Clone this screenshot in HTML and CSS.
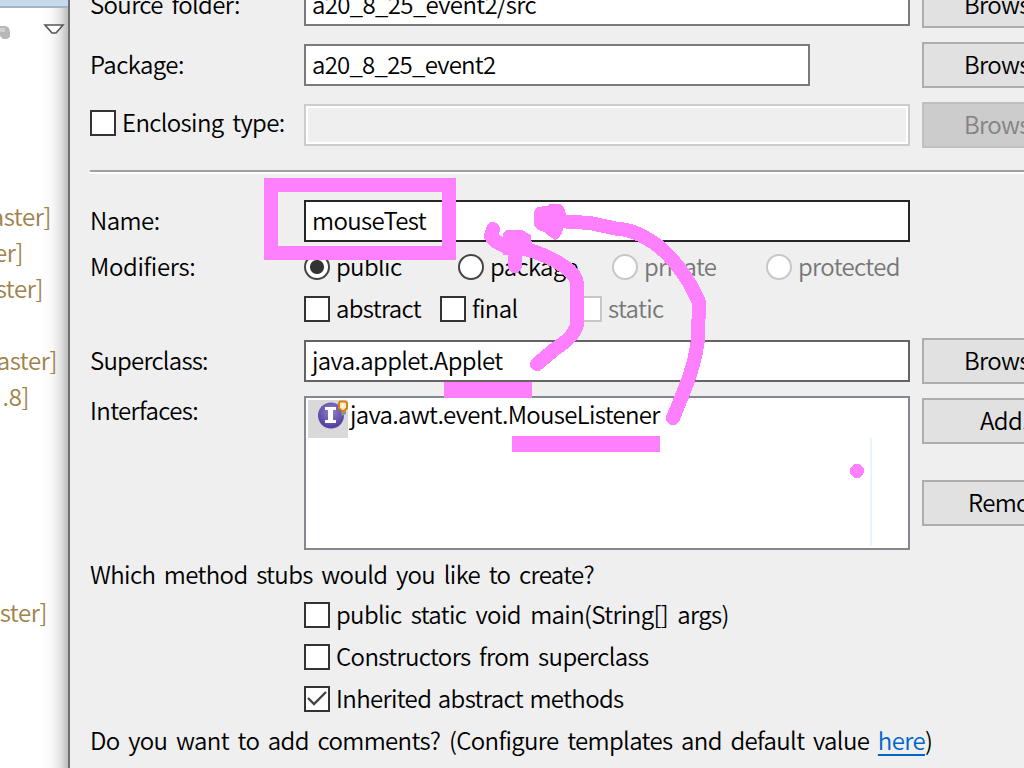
FILE: index.html
```
<!DOCTYPE html>
<html lang="en">
<head>
<meta charset="utf-8">
<title>New Java Class</title>
<link rel="stylesheet" href="styles.css">
</head>
<body>
<div class="screen">
  <aside class="explorer">
    <div class="tabbar"></div>
    <div class="toolbar">
      <svg class="tools" width="68" height="40" viewBox="0 0 68 40">
        <path d="M0 18H6L9 20L10 24V29L7 31H3L0 28Z" fill="#b8b8b8"/>
        <path d="M0 20H5V24H0Z" fill="#d0d0d0"/>
        <path d="M45 17H63L56 25H52Z" fill="#fff" stroke="#555" stroke-width="1.6"/>
      </svg>
    </div>
    <div class="tree">
      <div class="node w51"><span>aster]</span></div>
      <div class="node w22"><span>er]</span></div>
      <div class="node w42"><span>ster]</span></div>
      <div class="node"></div>
      <div class="node w57"><span>aster]</span></div>
      <div class="node w28"><span>.8]</span></div>
      <div class="node"></div><div class="node"></div><div class="node"></div><div class="node"></div><div class="node"></div>
      <div class="node w46"><span>ster]</span></div>
    </div>
  </aside>
  <main class="dialog">
    <div class="row">
      <label class="label"><span>Source folder:</span></label>
      <div class="field"><span>a20_8_25_event2/src</span></div>
      <div class="button"><span>Browse...</span></div>
    </div>
    <div class="row">
      <label class="label"><span class="t-package">Package:</span></label>
      <div class="field short"><span class="t-pkg">a20_8_25_event2</span></div>
      <div class="button"><span>Browse...</span></div>
    </div>
    <div class="row">
      <label class="label enclosing"><i class="box"></i><span>Enclosing type:</span></label>
      <div class="field off"></div>
      <div class="button off"><span>Browse...</span></div>
    </div>
    <div class="separator"></div>
    <div class="row name">
      <label class="label"><span class="t-name">Name:</span></label>
      <div class="field focus"><span>mouseTest</span></div>
    </div>
    <div class="row options">
      <label class="label"><span class="t-modifiers">Modifiers:</span></label>
      <div class="radios">
        <div class="option"><i class="radio on"></i><span>public</span></div>
        <div class="option"><i class="radio"></i><span>package</span></div>
        <div class="option off"><i class="radio"></i><span>private</span></div>
        <div class="option off"><i class="radio"></i><span>protected</span></div>
      </div>
    </div>
    <div class="row checks">
      <div class="option c1"><i class="box"></i><span>abstract</span></div>
      <div class="option c2"><i class="box"></i><span>final</span></div>
      <div class="option off"><i class="box"></i><span>static</span></div>
    </div>
    <div class="row super">
      <label class="label"><span class="t-super">Superclass:</span></label>
      <div class="field dark"><span>java.applet.Applet</span></div>
      <div class="button"><span>Browse...</span></div>
    </div>
    <div class="row interfaces">
      <label class="label"><span>Interfaces:</span></label>
      <div class="list">
        <div class="item">
          <div class="iconcell">
            <svg width="40" height="38" viewBox="0 0 40 38">
              <defs><radialGradient id="ball" cx=".5" cy=".35" r=".65"><stop offset="0" stop-color="#9181cc"/><stop offset="1" stop-color="#513b9c"/></radialGradient></defs>
              <circle cx="23" cy="15.500" r="13" fill="url(#ball)"/>
              <path d="M17 7H28V10H25V20H28V23H17V20H20V10H17Z" fill="#fff"/>
              <path d="M33 12L38 11V14L34 16Z" fill="#849a91"/>
              <path d="M32 1.500H37L39 3V8L36 11H34L31 8V3Z" fill="#fff0cc" stroke="#df7c13" stroke-width="2"/>
            </svg>
          </div>
          <span class="t-listener">java.awt.event.MouseListener</span>
        </div>
        <div class="listline"></div>
      </div>
      <div class="stack">
        <div class="button"><span class="t-add">Add...</span></div>
        <div class="button"><span class="t-remove">Remove</span></div>
      </div>
    </div>
    <div class="question"><span>Which method stubs would you like to create?</span></div>
    <div class="stubs">
      <div class="option"><i class="box"></i><span class="t-main">public static void main(String[] args)</span></div>
      <div class="option"><i class="box"></i><span>Constructors from superclass</span></div>
      <div class="option"><i class="box"><svg width="22" height="22" viewBox="0 0 22 22"><path d="M2 10L8 16L20 4" fill="none" stroke="#444" stroke-width="2.400"/></svg></i><span class="t-inherit">Inherited abstract methods</span></div>
    </div>
    <div class="comments"><span>Do you want to add comments? (Configure templates and default value <a>here</a>)</span></div>
  </main>
  <svg class="ink" width="1024" height="768" viewBox="0 0 1024 768" shape-rendering="crispEdges">
    <g fill="none" stroke="#ff80ff" stroke-width="14" stroke-linecap="round" stroke-linejoin="round">
      <rect x="271" y="185" width="178" height="68" stroke-linejoin="miter"/>
      <path d="M537 364L555 349Q577 335 577 322V283Q576 275 565 267Q546 254 525 249L507 247L495 241L491 236L493 229"/>
      <path d="M515 266V245"/>
      <path d="M673 418L682 396Q696 362 698 338L699 302L690 284Q671 254 654 243Q633 229 618 229L590 223L558 221"/>
    </g>
    <g fill="#ff80ff">
      <path d="M503 233L507 230H522L531 235L532 247L525 255H503Z"/>
      <path d="M534 212L537 207L547 206L550 204H560L564 207L566 215L562 233L559 238L555 240L549 236L544 232L538 230L534 226Z"/>
      <rect x="444" y="382" width="88" height="16"/>
      <rect x="512" y="436" width="148" height="16"/>
      <circle cx="857" cy="471" r="7"/>
    </g>
  </svg>
</div>
</body>
</html>
```
FILE: styles.css
```
* { box-sizing: border-box; }
body { margin: 0; font: 350 24px/30px "Noto Sans CJK KR DemiLight", "Noto Sans CJK KR", sans-serif; letter-spacing: -.64px; word-spacing: 3.900px; color: #000; }
.screen { position: relative; display: flex; width: 1024px; height: 768px; overflow: hidden; background: #fff; }
span { display: block; white-space: pre; margin-bottom: 2px; }
.explorer { width: 68px; flex: none; color: #a08249; background: linear-gradient(90deg, #fff 42px, #f8f8f8 52px, #e5e5e5 60px, #bdbdbd 68px); }
.tabbar { height: 8px; background: #c7d9eb; border-bottom: 2px solid #a5b3cc; }
.toolbar { height: 191px; }
.tools { display: block; }
.node { display: flex; justify-content: flex-end; align-items: center; height: 36px; letter-spacing: -.4px; }
.w51 { width: 51px; } .w22 { width: 23px; } .w42 { width: 43px; }
.w57 { width: 57px; } .w28 { width: 29px; } .w46 { width: 47px; }
.dialog { width: 956px; flex: none; height: 786px; margin-top: -18px; padding-left: 20px; border-left: 2px solid #707070; background: #efefef; }
.row { display: flex; align-items: center; height: 46px; margin-bottom: 14px; }
.label { display: flex; align-items: center; width: 214px; flex: none; }
.label.enclosing { padding-bottom: 4px; }
.field { display: flex; align-items: center; width: 606px; height: 42px; flex: none; padding-left: 6px; background: #fff; border: 2px solid #7a7a7a; }
.field.short { width: 506px; margin-right: 100px; }
.field.off { background: #efefef; border-color: #ccc; box-shadow: inset 0 0 0 2px #fff; }
.field.focus { border-color: #262626; }
.field.dark { border-color: #646464; }
.button { display: flex; align-items: center; width: 150px; height: 46px; flex: none; margin-left: 12px; padding-left: 40px; background: #e1e1e1; border: 2px solid #adadad; }
.button.off { color: #838383; background: #ccc; border-color: #bfbfbf; }
.box { display: block; width: 26px; height: 26px; flex: none; margin-right: 6px; background: #fff; border: 2px solid #333; }
.box svg { display: block; }
.separator { height: 4px; margin-top: 22px; background: #fff; border-top: 2px solid #a0a0a0; }
.row.name { height: 42px; margin: 26px 0 0; }
.row.options { height: 42px; margin: 4px 0 0; }
.radios { display: flex; }
.option { display: flex; align-items: center; height: 42px; }
.radios .option { width: 154px; }
.radio { width: 26px; height: 26px; flex: none; margin-right: 6px; background: #fff; border: 2px solid #444; border-radius: 50%; }
.radio.on { background: radial-gradient(circle, #333 0 6.500px, #fff 7.500px); }
.off { color: #777; }
.option.off .box, .option.off .radio { border-color: #c7c7c7; }
.row.checks { height: 42px; margin: 0 0 8px; padding-left: 214px; }
.c1 { width: 136px; } .c2 { width: 136px; }
.row.super { margin: 0 0 12px; }
.row.interfaces { align-items: flex-start; height: 154px; margin: 0; }
.interfaces .label { margin-top: -1px; }
.list { width: 606px; height: 154px; flex: none; background: #fff; border: 2px solid #828790; padding: 2px; }
.item { display: flex; height: 38px; align-items: center; }
.item .t-listener { margin-bottom: 11px; letter-spacing: -.68px; }
.iconcell { width: 40px; height: 38px; flex: none; margin-right: 2px; background: #d9d9d9; }
.iconcell svg { display: block; }
.listline { width: 2px; height: 108px; margin-left: 562px; background: #eaf2fe; }
.stack { display: flex; flex-direction: column; gap: 36px; padding-top: 2px; }
.question { display: flex; align-items: center; height: 44px; padding-top: 6px; }
.stubs { padding-left: 214px; }
.comments { display: flex; align-items: center; height: 42px; }
.comments a { color: #0066cc; text-decoration: underline; text-decoration-thickness: 2px; text-underline-offset: 4px; }
.t-add { margin-left: 16px; }
.t-remove { margin-left: 4px; }
.t-pkg { letter-spacing: -.75px; }
.t-package, .t-name { letter-spacing: -.55px; }
.t-modifiers { letter-spacing: -.35px; }
.t-super { letter-spacing: -.78px; }
.t-main { word-spacing: 4.600px; }
.t-inherit { word-spacing: 1.800px; }
.ink { position: absolute; left: 0; top: 0; }
```
